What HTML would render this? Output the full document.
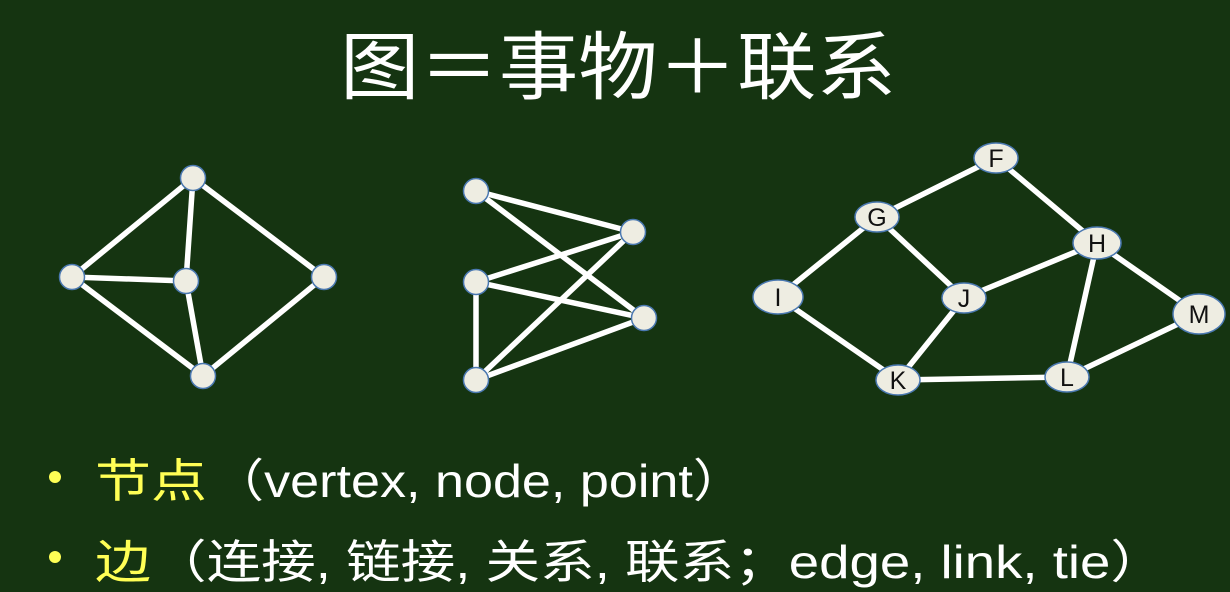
<!DOCTYPE html>
<html><head><meta charset="utf-8"><style>
html,body{margin:0;padding:0;background:#153411;}
svg{display:block}
</style></head><body>
<svg width="1230" height="592" viewBox="0 0 1230 592" xmlns="http://www.w3.org/2000/svg">
<rect width="1230" height="592" fill="#153411"/>
<text x="340" y="93" font-family="Liberation Sans, Noto Sans CJK SC, sans-serif" font-size="74" fill="#fff" textLength="556" lengthAdjust="spacingAndGlyphs">图＝事物＋联系</text>
<g stroke="#fff" stroke-width="5.5" fill="none" stroke-linecap="round">
<line x1="193" y1="178" x2="72" y2="277"/>
<line x1="193" y1="178" x2="186" y2="281"/>
<line x1="193" y1="178" x2="324" y2="277"/>
<line x1="72" y1="277" x2="186" y2="281"/>
<line x1="72" y1="277" x2="203" y2="376"/>
<line x1="186" y1="281" x2="203" y2="376"/>
<line x1="324" y1="277" x2="203" y2="376"/>
<line x1="476" y1="191" x2="633" y2="232"/>
<line x1="476" y1="191" x2="644" y2="318"/>
<line x1="476" y1="282" x2="633" y2="232"/>
<line x1="476" y1="282" x2="644" y2="318"/>
<line x1="476" y1="282" x2="476" y2="380"/>
<line x1="476" y1="380" x2="633" y2="232"/>
<line x1="476" y1="380" x2="644" y2="318"/>
<line x1="996" y1="158" x2="877" y2="217"/>
<line x1="996" y1="158" x2="1097" y2="243"/>
<line x1="877" y1="217" x2="778" y2="297"/>
<line x1="877" y1="217" x2="964" y2="298"/>
<line x1="964" y1="298" x2="1097" y2="243"/>
<line x1="964" y1="298" x2="898" y2="380"/>
<line x1="778" y1="297" x2="898" y2="380"/>
<line x1="898" y1="380" x2="1067" y2="377"/>
<line x1="1097" y1="243" x2="1067" y2="377"/>
<line x1="1097" y1="243" x2="1199" y2="314"/>
<line x1="1199" y1="314" x2="1067" y2="377"/>
</g>
<g fill="#EEEDE2" stroke="#4a78b0" stroke-width="1.5">
<circle cx="193" cy="178" r="12.5"/><circle cx="72" cy="277" r="12.5"/><circle cx="186" cy="281" r="12.5"/><circle cx="324" cy="277" r="12.5"/><circle cx="203" cy="376" r="12.5"/>
<circle cx="476" cy="191" r="12.5"/><circle cx="633" cy="232" r="12.5"/><circle cx="476" cy="282" r="12.5"/><circle cx="644" cy="318" r="12.5"/><circle cx="476" cy="380" r="12.5"/>
<ellipse cx="996" cy="158" rx="22" ry="15"/><ellipse cx="877" cy="217" rx="22" ry="15"/><ellipse cx="1097" cy="243" rx="24" ry="16"/><ellipse cx="778" cy="297" rx="25" ry="17"/><ellipse cx="964" cy="298" rx="22" ry="15"/><ellipse cx="1199" cy="314" rx="26" ry="20"/><ellipse cx="898" cy="380" rx="22" ry="15"/><ellipse cx="1067" cy="377" rx="22" ry="15"/>
</g>
<g font-family="Liberation Sans, sans-serif" font-size="25" fill="#111" text-anchor="middle">
<text x="996" y="167">F</text><text x="877" y="226">G</text><text x="1097" y="252">H</text><text x="778" y="306">I</text><text x="964" y="307">J</text><text x="1199" y="323">M</text><text x="898" y="389">K</text><text x="1067" y="386">L</text>
</g>
<circle cx="55" cy="477" r="6" fill="#FFFF55"/>
<circle cx="55" cy="557" r="6" fill="#FFFF55"/>
<g font-family="Liberation Sans, Noto Sans CJK SC, sans-serif" font-size="46">
<text x="95" y="497" fill="#FFFF55" textLength="112" lengthAdjust="spacingAndGlyphs">节点</text>
<text x="212" y="497" fill="#fff" textLength="533" lengthAdjust="spacingAndGlyphs">（vertex, node, point）</text>
<text x="95" y="578" fill="#FFFF55" textLength="56" lengthAdjust="spacingAndGlyphs">边</text>
<text x="152" y="578" fill="#fff" textLength="1013" lengthAdjust="spacingAndGlyphs">（连接, 链接, 关系, 联系；edge, link, tie）</text>
</g>
</svg>
</body></html>
